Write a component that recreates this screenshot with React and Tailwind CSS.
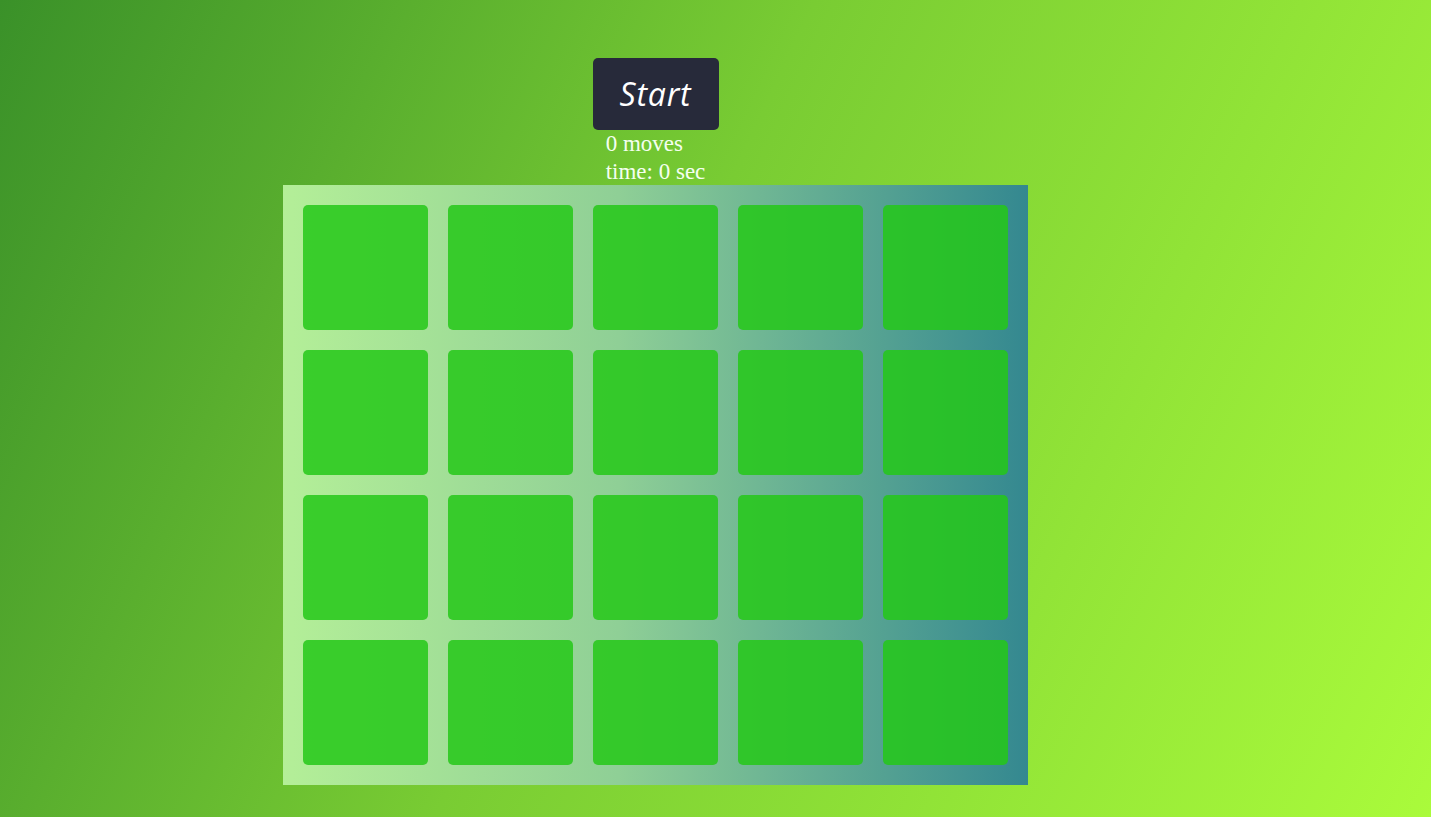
import React, { useState } from 'react';

const ROWS = 4;
const COLS = 5;

function App() {
  const [moves] = useState(0);
  const [time] = useState(0);

  const cards = Array.from({ length: ROWS * COLS }, (_, i) => i);

  return (
    <main className="min-h-screen w-full bg-[linear-gradient(115deg,#3a9129_0%,#79cc33_45%,#aafb3b_100%)] font-['Liberation_Serif',serif]">
      <div className="w-[1311px] flex flex-col items-center pt-[58px]">
        {/* Start button */}
        <button className="w-[126px] h-[72px] bg-[#272a3a] rounded-[5px] text-white text-[32px] italic font-['Open_Sans',sans-serif] tracking-wide">
          Start
        </button>

        {/* Stats */}
        <div className="text-[23px] leading-[27.5px] text-[#f4fff0]">
          <div>{moves} moves</div>
          <div>time: {time} sec</div>
        </div>

        {/* Board */}
        <div className="grid grid-cols-5 gap-5 p-5 bg-[linear-gradient(90deg,#b4ef98_0%,#8fcf96_45%,#348890_100%)]">
          {cards.map((c) => (
            <div key={c} className="w-[125px] h-[125px] rounded-[5px] bg-[#24c818]/85"></div>
          ))}
        </div>
      </div>
    </main>
  );
}

export default App;
